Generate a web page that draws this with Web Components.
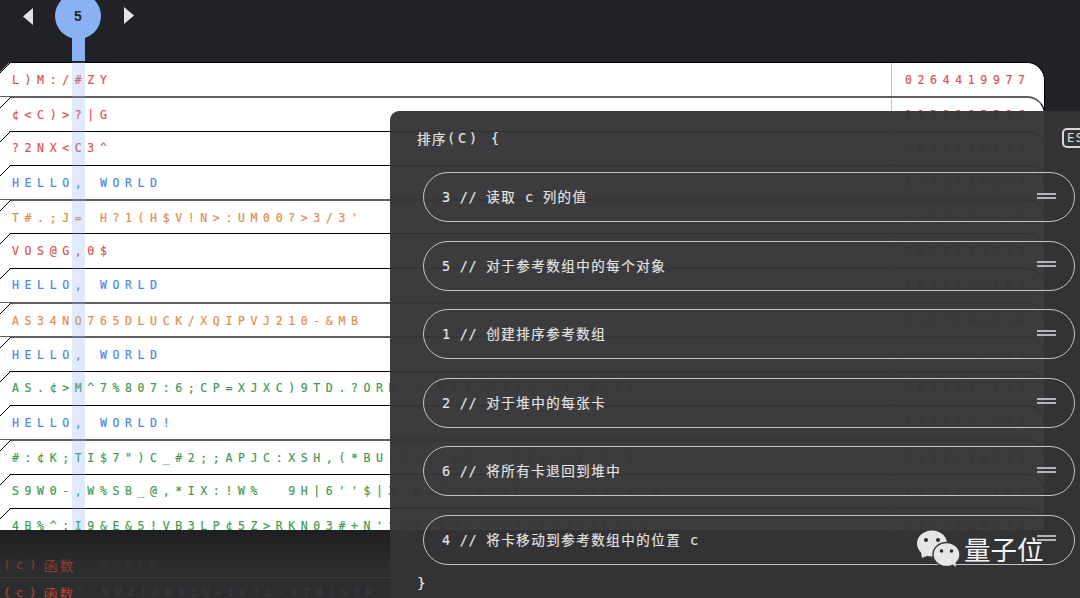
<!DOCTYPE html>
<html lang="zh">
<head>
<meta charset="utf-8">
<title>排序</title>
<style>
  html, body { margin: 0; height: 100%; overflow: hidden; background: #212225; }
</style>
</head>
<body>
<sort-stage>
  <card-row tone="red" code="0264419977" first>L)M:/#ZY</card-row>
  <card-row tone="red" code="1139105596" soft>¢&lt;C)&gt;?|G</card-row>
  <card-row tone="red" code="0868436478">?2NX&lt;C3^</card-row>
  <card-row tone="blue" code="1273630667">HELLO, WORLD</card-row>
  <card-row tone="orange" code="1139106192" soft>T#.;J= H?1(H$V!N&gt;:UM00?&gt;3/3'</card-row>
  <card-row tone="red" code="0860893328">VOS@G,0$</card-row>
  <card-row tone="blue" code="1612582766">HELLO, WORLD</card-row>
  <card-row tone="orange" code="1617848164" soft>AS34NO765DLUCK/XQIPVJ210-&amp;MB</card-row>
  <card-row tone="blue" code="1000852144" soft>HELLO, WORLD</card-row>
  <card-row tone="green" code="0000897229">AS.¢&gt;M^7%807:6;CP=XJXC)9TD.?ORD-=^WZI+NT#&lt;"/(;6+0!</card-row>
  <card-row tone="blue" code="1139101904">HELLO, WORLD!</card-row>
  <card-row tone="green" code="0380398643" soft>#:¢K;TI$7")C_#2;;APJC:XSH,(*BU:?U8`60(!/GK8,ST:J,I</card-row>
  <card-row tone="green" code="1365427565">S9W0-,W%SB_@,*IX:!W%  9H|6''$|X'NI8  63IE':C&gt;=&lt;%1#/A</card-row>
  <card-row tone="green" code="0767089048">4B%^:I9&amp;E&amp;5!VB3LP¢5Z&gt;RKN03#+N'^H0Z#H&gt;I&gt;VN(Y8J&lt;(FNSW</card-row>
</sort-stage>

<script>
const MONO = `"DejaVu Sans Mono", "Noto Sans CJK SC", monospace`;

class SliderKnob extends HTMLElement {
  constructor() {
    super();
    this.attachShadow({ mode: 'open' });
    this.shadowRoot.innerHTML = `
      <style>
        :host {
          display: flex;
          align-items: center;
          justify-content: center;
          position: relative;
          width: 46px;
          height: 46px;
          border-radius: 50%;
          background: #8ab1f3;
          color: #26282c;
          font: bold 14px "Liberation Sans", sans-serif;
        }
        .stem {
          position: absolute;
          left: 17px;
          top: 44px;
          width: 13px;
          height: 24px;
          background: #8ab1f3;
        }
      </style>
      <slot></slot>
      <div class="stem"></div>
    `;
  }
}

class CardRow extends HTMLElement {
  constructor() {
    super();
    this.attachShadow({ mode: 'open' });
    this.shadowRoot.innerHTML = `
      <style>
        :host {
          display: block;
          position: relative;
          box-sizing: border-box;
          flex: none;
          height: 50.3px;
          margin-bottom: -16px;
          background: #fff;
          border-top: 1px solid #000;
          border-right: 1px solid #000;
          border-top-right-radius: 18px;
          font: 11.5px ${MONO};
          letter-spacing: 5.63px;
          -webkit-text-stroke: 0.2px;
          --tone: #d9534f;
        }
        :host([soft]) { border-top: 2px solid #5f5f5f; }
        :host([tone="blue"]) { --tone: #4a86e8; }
        :host([tone="orange"]) { --tone: #e08e4b; }
        :host([tone="green"]) { --tone: #439a52; }
        svg {
          position: absolute;
          left: 0;
          top: -1px;
          display: block;
        }
        #line {
          display: flex;
          height: 33.3px;
          align-items: center;
        }
        #text {
          flex: 1;
          min-width: 0;
          overflow: hidden;
          padding-left: 12px;
          color: var(--tone);
          white-space: pre;
        }
        #code {
          box-sizing: border-box;
          flex: none;
          width: 153px;
          padding-left: 14px;
          color: #d9534f;
        }
        #rule {
          position: absolute;
          right: 152px;
          top: 0;
          bottom: 0;
          width: 1px;
          background: #efb4b1;
        }
      </style>
      <svg width="11" height="11" viewBox="0 0 11 11">
        <polygon points="0,0 10,0 0,10" fill="${this.hasAttribute('first') ? '#212225' : '#fff'}"></polygon>
        <line x1="10.5" y1="0.5" x2="0" y2="11" stroke="#000"></line>
      </svg>
      <div id="line">
        <div id="text"><slot></slot></div>
        <div id="code">${this.getAttribute('code')}</div>
      </div>
      <div id="rule"></div>
    `;
  }
}

class FadedRow extends HTMLElement {
  constructor() {
    super();
    this.attachShadow({ mode: 'open' });
    this.shadowRoot.innerHTML = `
      <style>
        :host {
          display: flex;
          position: relative;
          box-sizing: border-box;
          align-items: center;
          padding-left: 3px;
          font: 13px ${MONO};
          color: var(--label, #8e3b30);
        }
        .tag { letter-spacing: 5px; }
        .name { font-size: 14px; letter-spacing: 2px; margin-left: 2px; }
        .ghost {
          position: absolute;
          left: var(--ghost-left, 77px);
          font-size: 11.5px;
          letter-spacing: 5.63px;
          color: var(--ghost, #3b3b3d);
          white-space: pre;
        }
      </style>
      <span class="tag">(c)</span><span class="name">函数</span><span class="ghost"><slot></slot></span>
    `;
  }
}

class SortPill extends HTMLElement {
  constructor() {
    super();
    this.attachShadow({ mode: 'open' });
    this.shadowRoot.innerHTML = `
      <style>
        :host {
          display: flex;
          box-sizing: border-box;
          flex: none;
          align-items: center;
          justify-content: space-between;
          height: 50px;
          padding: 0 18px;
          border: 1px solid #c6c6c8;
          border-radius: 25px;
        }
        #label { margin-top: -2px; }
        #handle {
          display: flex;
          flex-direction: column;
          gap: 2px;
          width: 19px;
          margin-top: -3px;
        }
        #handle i {
          display: block;
          height: 2px;
          background: #b4b4b8;
        }
      </style>
      <div id="label"><slot></slot></div>
      <div id="handle"><i></i><i></i></div>
    `;
  }
}

class SortModal extends HTMLElement {
  constructor() {
    super();
    this.attachShadow({ mode: 'open' });
    this.shadowRoot.innerHTML = `
      <style>
        :host {
          display: block;
          position: absolute;
          left: 390px;
          top: 111px;
          right: 0;
          bottom: 0;
          overflow: hidden;
          border-top-left-radius: 9px;
          background: rgba(52, 52, 54, 0.96);
          color: #e4e4e4;
          font: 13.5px ${MONO};
          -webkit-text-stroke: 0.15px;
        }
        #head {
          display: flex;
          height: 54px;
          align-items: center;
          padding-left: 27px;
          letter-spacing: 1.5px;
        }
        #head span { letter-spacing: 2.9px; white-space: pre; }
        #list {
          display: flex;
          flex-direction: column;
          gap: 18.6px;
          margin: 7px 5px 0 33px;
        }
        #foot {
          display: flex;
          height: 36px;
          align-items: center;
          padding-left: 27px;
          font-size: 14.5px;
        }
        #esc {
          position: absolute;
          left: 672px;
          top: 17px;
          padding: 1.5px 3px;
          border: 2px solid #d8d8d8;
          border-radius: 5px;
          font-size: 12px;
          line-height: 13px;
          color: #d8d8d8;
          letter-spacing: 1.5px;
        }
      </style>
      <div id="head">排序<span>(C) {</span></div>
      <div id="esc">ESC</div>
      <div id="list"><slot></slot></div>
      <div id="foot">}</div>
    `;
  }
}

class BrandMark extends HTMLElement {
  constructor() {
    super();
    this.attachShadow({ mode: 'open' });
    this.shadowRoot.innerHTML = `
      <style>
        :host {
          display: flex;
          position: absolute;
          left: 917px;
          top: 529px;
          align-items: center;
          gap: 3px;
          color: #f4f4f4;
          font: 26.5px "Noto Sans CJK SC", sans-serif;
        }
        svg { display: block; flex: none; }
        span { margin-top: 1px; line-height: 38px; }
      </style>
      <svg width="44" height="38" viewBox="0 0 44 38">
        <ellipse cx="15" cy="13.5" rx="15" ry="13" fill="#e6e6e6"></ellipse>
        <polygon points="4,22 5,28 12,25" fill="#e6e6e6"></polygon>
        <circle cx="9" cy="10" r="2" fill="#2c2c2e"></circle>
        <circle cx="21" cy="10" r="2" fill="#2c2c2e"></circle>
        <ellipse cx="29.5" cy="24.5" rx="13.5" ry="12" fill="#e6e6e6" stroke="#38383a" stroke-width="1.4"></ellipse>
        <polygon points="34,33 39,37 38,29" fill="#e6e6e6"></polygon>
        <circle cx="24.5" cy="21" r="1.8" fill="#2c2c2e"></circle>
        <circle cx="34.5" cy="21" r="1.8" fill="#2c2c2e"></circle>
      </svg>
      <span><slot></slot></span>
    `;
  }
}

class SortStage extends HTMLElement {
  constructor() {
    super();
    this.attachShadow({ mode: 'open' });
    this.shadowRoot.innerHTML = `
      <style>
        :host {
          display: block;
          position: relative;
          width: 1080px;
          height: 598px;
          overflow: hidden;
          background: #212225;
        }
        #nav {
          display: flex;
          box-sizing: border-box;
          height: 62px;
          align-items: flex-start;
          padding: 8px 0 0 23px;
        }
        #nav svg { display: block; flex: none; }
        slider-knob { margin: -15px 23px 0 22px; flex: none; }
        #stack {
          display: flex;
          flex-direction: column;
          position: relative;
          width: 1045px;
          height: 468px;
          overflow: hidden;
        }
        #band {
          position: absolute;
          left: 72px;
          top: 0;
          bottom: 0;
          width: 13px;
          background: rgba(138, 177, 243, 0.27);
        }
        #low {
          height: 68px;
          background: linear-gradient(#1e1f21, #2c2d2f 55%);
        }
        #low-a { height: 47px; padding-top: 22px; --ghost-left: 100px; --ghost: #323335; }
        #low-b { height: 21px; padding-top: 9px; --label: #bb4232; border-top: 1px solid #3a3b3d; }
      </style>
      <div id="nav">
        <svg width="10" height="17" viewBox="0 0 10 17"><polygon points="10,0 10,17 0,8.5" fill="#e4e4e4"></polygon></svg>
        <slider-knob>5</slider-knob>
        <svg width="10" height="17" viewBox="0 0 10 17" style="margin-top:-1px"><polygon points="0,0 0,17 10,8.5" fill="#e4e4e4"></polygon></svg>
      </div>
      <div id="stack">
        <slot></slot>
        <div id="band"></div>
      </div>
      <div id="low">
        <faded-row id="low-a">WORLD</faded-row>
        <faded-row id="low-b">^:%P4(@R01U+IKTL-0T0|&gt;¢P</faded-row>
      </div>
      <sort-modal>
        <sort-pill><span style="letter-spacing:.7px">3 // </span><span style="letter-spacing:1.5px">读取</span><span style="letter-spacing:.7px"> c </span><span style="letter-spacing:1.5px">列的值</span></sort-pill>
        <sort-pill><span style="letter-spacing:.7px">5 // </span><span style="letter-spacing:1.5px">对于参考数组中的每个对象</span></sort-pill>
        <sort-pill><span style="letter-spacing:.7px">1 // </span><span style="letter-spacing:1.5px">创建排序参考数组</span></sort-pill>
        <sort-pill><span style="letter-spacing:.7px">2 // </span><span style="letter-spacing:1.5px">对于堆中的每张卡</span></sort-pill>
        <sort-pill><span style="letter-spacing:.7px">6 // </span><span style="letter-spacing:1.5px">将所有卡退回到堆中</span></sort-pill>
        <sort-pill><span style="letter-spacing:.7px">4 // </span><span style="letter-spacing:1.5px">将卡移动到参考数组中的位置</span><span style="letter-spacing:.7px"> c</span></sort-pill>
      </sort-modal>
      <brand-mark>量子位</brand-mark>
    `;
  }
}

customElements.define('slider-knob', SliderKnob);
customElements.define('card-row', CardRow);
customElements.define('faded-row', FadedRow);
customElements.define('sort-pill', SortPill);
customElements.define('sort-modal', SortModal);
customElements.define('brand-mark', BrandMark);
customElements.define('sort-stage', SortStage);
</script>
</body>
</html>
